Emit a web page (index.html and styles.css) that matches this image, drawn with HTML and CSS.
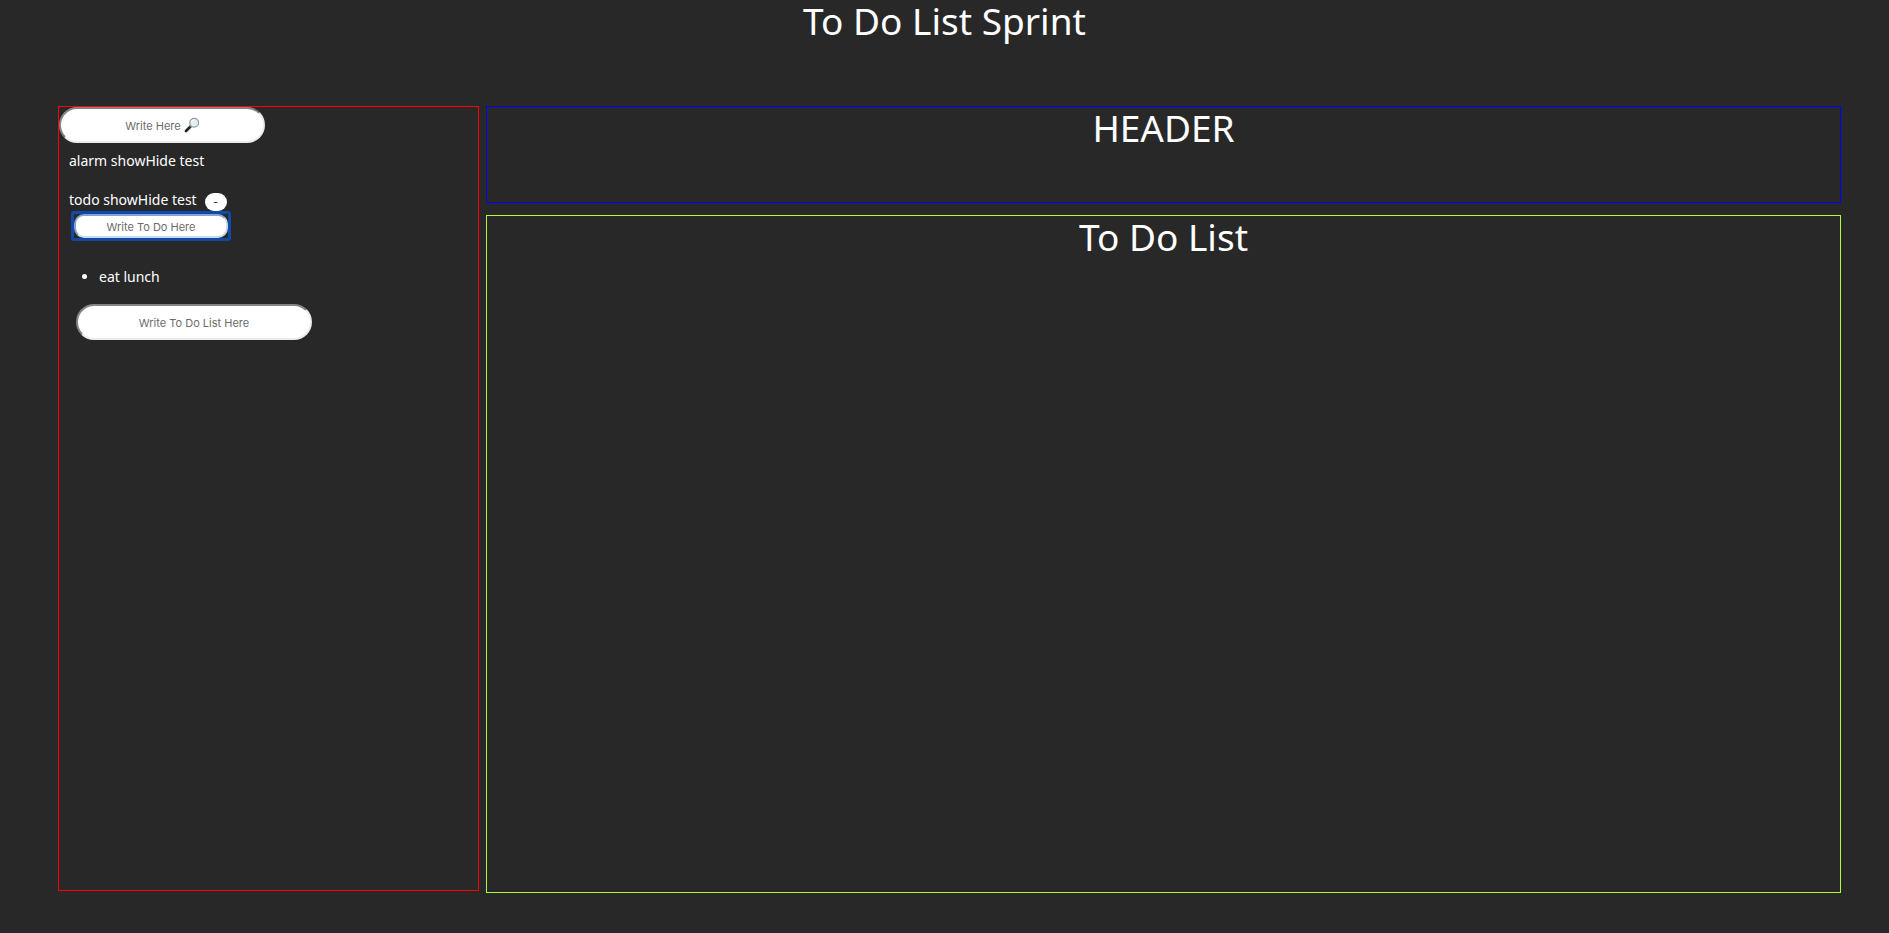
FILE: index.html
```
<!DOCTYPE html>
<html lang="en">
<head>
<meta charset="utf-8">
<title>To Do List Sprint</title>
<link rel="stylesheet" href="styles.css">
</head>
<body>
<h1 class="heading">To Do List Sprint</h1>
<main class="board">
  <aside class="sidebar">
    <div class="search">
      <input class="field search-field" type="text" placeholder="Write Here" aria-label="Search">
      <svg class="search-icon" viewBox="0 0 16 16" aria-hidden="true">
        <path d="M2 14 6.5 9.5" stroke="#222" stroke-width="2.8" stroke-linecap="round"/>
        <path d="M6 10 7.5 8.5" stroke="#777" stroke-width="1.5"/>
        <circle cx="10.2" cy="5.7" r="4.4" fill="#e4edf5" stroke="#96989c" stroke-width="1.2"/>
        <path d="M7.6 5.6a2.7 2.7 0 0 1 2.7-2.6" fill="none" stroke="#fff" stroke-width="1.2"/>
      </svg>
    </div>
    <p class="label">alarm showHide test</p>
    <div class="toggle-row">
      <label for="todo">todo showHide test</label>
      <button class="toggle" type="button" aria-label="Hide to do field">-</button>
    </div>
    <div class="focus-ring">
      <input class="field todo-field" id="todo" type="text" placeholder="Write To Do Here">
    </div>
    <ul class="items">
      <li>eat lunch</li>
    </ul>
    <input class="field list-field" type="text" placeholder="Write To Do List Here" aria-label="To do list item">
  </aside>
  <div class="content">
    <header class="panel panel-header"><h2 class="heading">HEADER</h2></header>
    <section class="panel panel-list"><h2 class="heading">To Do List</h2></section>
  </div>
</main>
</body>
</html>
```
FILE: styles.css
```
* { box-sizing: border-box; }

body {
  display: flex;
  flex-direction: column;
  min-height: 100vh;
  margin: 0;
  background: #282828;
  color: #fff;
  font: 14px/22px "Noto Sans", "Open Sans", sans-serif;
}

.heading {
  margin: 0;
  font-size: 37px;
  font-weight: 400;
  line-height: 42px;
  text-align: center;
}

.board {
  display: grid;
  flex: 1;
  grid-template-columns: 421fr 1355fr;
  gap: 7px;
  padding: 64px 48px 40px 58px;
}

.sidebar {
  display: flex;
  flex-direction: column;
  align-items: flex-start;
  margin-bottom: 2px;
  border: 1px solid #f00;
}

.field {
  border: 2px solid;
  border-color: #858585 #ececec #ececec #858585;
  border-radius: 18px;
  background: #fff;
  color: #222;
  font: 11px Inter, sans-serif;
  text-align: center;
}

.field::placeholder { color: #6b6b6b; opacity: 1; }

.search { position: relative; }

.search-field {
  display: block;
  width: 206px;
  height: 36px;
  padding: 2px 18px 0 0;
}

.search-icon {
  position: absolute;
  top: 10px;
  left: 125px;
  width: 16px;
  height: 16px;
}

.label { margin: 7px 10px 17px; }

.toggle-row {
  display: flex;
  align-items: center;
  gap: 8px;
  margin-left: 10px;
}

.toggle {
  width: 22px;
  height: 18px;
  margin-top: 4px;
  padding: 0;
  border: 0;
  border-radius: 9px;
  background: #fff;
  color: #222;
  font: 11px Inter, sans-serif;
}

.focus-ring {
  display: flex;
  margin: 0 0 0 12px;
  border: 3px solid #1249a5;
  border-radius: 3px;
}

.todo-field {
  width: 154px;
  height: 24px;
  padding: 1px 0 0;
  border-color: #7ba3df #c5daf7 #c5daf7 #7ba3df;
  border-radius: 10px;
}

.items { margin: 25px 0 16px; padding-left: 40px; }

.list-field {
  width: 236px;
  height: 36px;
  margin-left: 17px;
  padding: 2px 0 0;
}

.content {
  display: flex;
  flex-direction: column;
  gap: 12px;
}

.panel { border: 1px solid; }
.panel-header { min-height: 97px; border-color: #00f; }
.panel-list { flex: 1; border-color: #adff2f; }
```
